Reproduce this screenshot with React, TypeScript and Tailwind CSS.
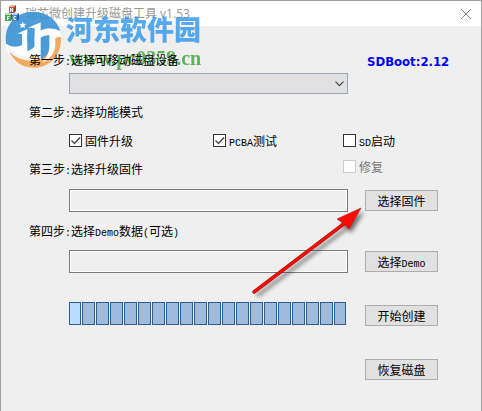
import type { ReactNode } from "react";

function Latin({ children }: { children: ReactNode }) {
  return (
    <span className="font-['Liberation_Mono',monospace] text-[10px] leading-none">{children}</span>
  );
}

function BlocksIcon() {
  return (
    <svg width="16" height="17" viewBox="0 0 16 17" aria-hidden="true" className="relative z-10 shrink-0">
      <path d="M5 2l2-2h5v6l-2 2H5z" fill="#9a3a22" />
      <path d="M5 2h5v6H5z" fill="#dd4f30" />
      <path d="M5 2l2-2h5l-2 2z" fill="#f3b7a4" />
      <path d="M6.500 3v4M8.500 3v4M6.500 5h2" stroke="#fff" />
      <path d="M1 10l1-2h6v6l-1 2H1z" fill="#2d7442" />
      <path d="M1 10h6v6H1z" fill="#4fa35b" />
      <path d="M1 10l1-2h6l-1 2z" fill="#bfe0b6" />
      <path d="M3.500 15v-3.500h2M3.500 13.500H5" stroke="#fff" fill="none" />
      <path d="M8 10l2-2h5v6l-2 2H8z" fill="#2a5a92" />
      <path d="M8 10h5v6H8z" fill="#4389c4" />
      <path d="M8 10l2-2h5l-2 2z" fill="#b3d7ee" />
      <path d="M12 11.500h-2v3h2" stroke="#fff" fill="none" />
    </svg>
  );
}

function BrandLogo() {
  return (
    <svg width="62" height="68" viewBox="0 0 186 204" aria-hidden="true" className="mt-px shrink-0 opacity-90">
      <circle cx="93" cy="110" r="84" fill="#fff" />
      <path d="M12 122C4 70 40 26 93 26c42 0 72 24 82 58-28-14-58-8-80 16-26 30-58 40-83 22z" fill="#3a94d4" />
      <path d="M14 128c22 22 50 22 78 4l-4 50c-4 5-9 8-14 10-32-8-52-30-60-64z" fill="#f4f4f4" />
      <path d="M176 100c6 48-24 88-70 94-12 1-24 0-34-3 32-4 48-20 58-44 8-24 22-42 46-47z" fill="#f3a34f" />
      <path d="M22 146c10 22 28 38 50 45 18-2 32-10 42-22-34 8-66 2-92-23z" fill="#f3a34f" />
      <path d="M14 126c30 16 58 8 82-22 20-24 50-30 78-14l2 12c-30-2-46 14-54 36-16 34-72 34-108-12z" fill="#fff" />
      <path d="M30 100l20-12v40c-8 2-15 1-22-2z" fill="#3a94d4" />
      <path d="M46 92l30-14v44c0 10-6 18-20 20 4-6 4-10 4-16V92z" fill="#fff" />
      <path d="M76 92l22-10v48c-6 8-14 12-22 14z" fill="#3a94d4" />
      <path d="M78 74l38-16v78c0 16-8 26-26 28 6-8 8-16 8-26V76z" fill="#fff" />
      <path d="M116 82c18-8 38-6 54 4l-4 12c-18-6-36-4-50 8z" fill="#fff" />
      <path d="M116 104c8-5 18-8 28-8v30c0 18-10 34-28 44z" fill="#3a94d4" />
      <path d="M142 92l18 2v28c0 26-14 46-40 56 14-14 22-28 22-50z" fill="#fff" />
      <path d="M62 55l3 7 8 1-6 5 2 8-7-4-7 4 2-8-5-5 8-1z" fill="#fff" />
    </svg>
  );
}

function Watermark() {
  return (
    <div className="pointer-events-none absolute top-px left-px flex" aria-hidden="true">
      <BrandLogo />
      <div className="mt-3 ml-[2px] whitespace-nowrap">
        <div className="h-8 font-['Noto_Sans_CJK_SC',sans-serif] text-[27px] leading-[30px] font-black text-[#2f96ea] opacity-80">
          河东软件园
        </div>
        <div className="mt-[2px] ml-[3px] font-['Liberation_Serif',serif] text-[20px] leading-5 font-bold text-[#3aa336] opacity-80">
          www.pc0359.cn
        </div>
      </div>
    </div>
  );
}

function PointerArrow() {
  return (
    <svg
      width="122"
      height="100"
      viewBox="0 0 122 100"
      className="pointer-events-none absolute top-[203px] left-[247px] z-20"
      aria-hidden="true"
    >
      <g opacity=".65" className="blur-[2px]" transform="translate(3 4)">
        <path d="M6 88L97 19" stroke="#333" strokeWidth="3" />
        <path d="M113 4L89 15l6 4 5 6z" fill="#222" />
      </g>
      <path d="M6 88L97 19" stroke="#a31010" strokeWidth="3.500" strokeLinecap="round" />
      <path d="M6 88L97 19" stroke="#ff0808" strokeWidth="2.500" strokeLinecap="round" />
      <path d="M113 4L89 15l6 4 6 6z" fill="#ff0808" stroke="#b01818" strokeWidth=".6" />
    </svg>
  );
}

function Check({
  label,
  checked = false,
  disabled = false,
}: {
  label: ReactNode;
  checked?: boolean;
  disabled?: boolean;
}) {
  return (
    <label className={`flex h-[13px] items-center gap-[3px] whitespace-nowrap ${disabled ? "text-[#777]" : ""}`}>
      <span className="grid size-[13px]">
        <input
          type="checkbox"
          defaultChecked={checked}
          disabled={disabled}
          className="peer col-start-1 row-start-1 size-[13px] appearance-none border border-[#333] bg-white disabled:border-[#ccc]"
        />
        <svg
          viewBox="0 0 13 13"
          className="pointer-events-none invisible col-start-1 row-start-1 size-[13px] peer-checked:visible"
          aria-hidden="true"
        >
          <path d="M2.500 6.500l3 3L11 3.500" fill="none" stroke="#444" strokeWidth="1.400" />
        </svg>
      </span>
      <span>{label}</span>
    </label>
  );
}

function ActionButton({ children }: { children: ReactNode }) {
  return (
    <button
      type="button"
      className="flex h-[21px] w-[73px] shrink-0 items-center justify-center border border-[#adadad] bg-[#e1e1e1] whitespace-nowrap"
    >
      <span>{children}</span>
    </button>
  );
}

function PathRow({ id, button }: { id: string; button: ReactNode }) {
  return (
    <div className="flex items-center gap-[17px] pl-10">
      <input
        id={id}
        type="text"
        readOnly
        className="h-[23px] min-w-0 flex-1 border border-[#7a7a7a] bg-[#efefef] px-1 ring-1 ring-white ring-inset"
      />
      <ActionButton>{button}</ActionButton>
    </div>
  );
}

const cells = Array.from({ length: 20 }, (_, i) => i);

export default function App() {
  return (
    <div className="relative border border-[#a0a0a0] bg-[#efefef] font-['Noto_Sans_CJK_SC',sans-serif] text-xs leading-[18px] text-black">
      <header className="flex h-[25px] items-center bg-white pr-[9px] pl-[3px]">
        <BlocksIcon />
        <h1 className="ml-[5px] flex-1 font-['Open_Sans','Noto_Sans_CJK_SC',sans-serif] text-[#999]">
          瑞芯微创建升级磁盘工具 v1.53
        </h1>
        <button type="button" aria-label="关闭">
          <svg width="12" height="12" viewBox="0 0 12 12" aria-hidden="true">
            <path d="M1 1l10 10M11 1L1 11" stroke="#888" />
          </svg>
        </button>
      </header>

      <form className="relative z-10 pt-[25px] pr-[43px] pb-[31px] pl-7">
        <div className="flex h-[18px] items-center justify-between">
          <label htmlFor="device">
            第一步<Latin>:</Latin>选择可移动磁盘设备
          </label>
          <output className="mt-[3px] w-[71px] font-['DejaVu_Sans_Condensed','DejaVu_Sans',sans-serif] text-[13px] font-bold whitespace-nowrap text-[#0000ff]">
            SDBoot:2.12
          </output>
        </div>
        <div className="mt-1 mr-[90px] ml-10 grid">
          <select
            id="device"
            className="col-start-1 row-start-1 h-[21px] w-full appearance-none border border-[#9aa5b1] bg-[#e1e1e1]"
          />
          <svg
            width="9"
            height="6"
            viewBox="0 0 9 6"
            className="pointer-events-none col-start-1 row-start-1 mr-1 self-center justify-self-end"
            aria-hidden="true"
          >
            <path d="M.5 .7l4 4 4-4" fill="none" stroke="#444" strokeWidth="1.200" />
          </svg>
        </div>

        <fieldset>
          <legend className="h-7 pt-[9px]">
            第二步<Latin>:</Latin>选择功能模式
          </legend>
          <div className="mt-3 flex pl-10">
            <div className="w-36">
              <Check checked label="固件升级" />
            </div>
            <Check checked label={<><Latin>PCBA</Latin>测试</>} />
            <div className="ml-auto w-[95px]">
              <Check label={<><Latin>SD</Latin>启动</>} />
            </div>
          </div>
        </fieldset>

        <div className="mt-[13px] flex h-[19px] justify-between">
          <label htmlFor="firmware">
            第三步<Latin>:</Latin>选择升级固件
          </label>
          <div className="w-[95px]">
            <Check disabled label="修复" />
          </div>
        </div>
        <div className="mt-[10px]">
          <PathRow id="firmware" button="选择固件" />
        </div>

        <label htmlFor="demo" className="mt-[10px] block h-[18px]">
          第四步<Latin>:</Latin>选择<Latin>Demo</Latin>数据<Latin>(</Latin>可选<Latin>)</Latin>
        </label>
        <div className="mt-[10px]">
          <PathRow id="demo" button={<>选择<Latin>Demo</Latin></>} />
        </div>

        <div className="mt-[29px] flex items-start gap-[19px] pl-10">
          <div
            role="progressbar"
            aria-label="创建进度"
            aria-valuenow={0}
            className="flex h-[23px] min-w-0 flex-1 gap-px"
          >
            {cells.map((i) => (
              <span
                key={i}
                className="flex-1 border border-[#2d5f95] bg-[#9fbbdb] first:w-3 first:flex-none first:bg-[#bbdbff] last:w-3 last:flex-none"
              />
            ))}
          </div>
          <div className="mt-[3px] flex flex-col gap-[33px]">
            <ActionButton>开始创建</ActionButton>
            <ActionButton>恢复磁盘</ActionButton>
          </div>
        </div>
      </form>

      <Watermark />
      <PointerArrow />
    </div>
  );
}
